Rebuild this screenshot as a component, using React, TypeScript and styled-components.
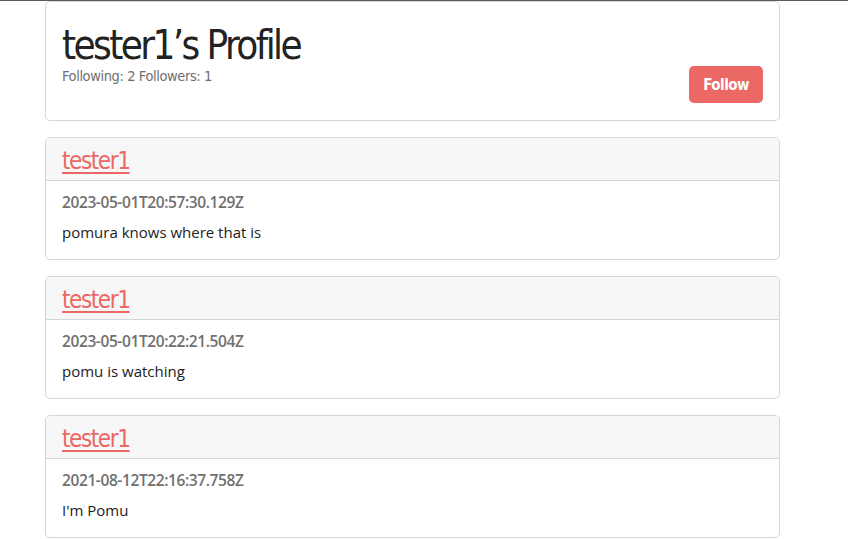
import styled, { createGlobalStyle } from "styled-components";

const Global = createGlobalStyle`
  html, body {
    margin: 0;
    padding: 0;
    background: #fff;
  }
  body {
    font-family: "Open Sans", "DejaVu Sans", sans-serif;
    color: #222;
  }
`;

const TopBar = styled.div`
  height: 1px;
  background: #5b5b5b;
`;

const Container = styled.div`
  width: 735px;
  margin-left: 45px;
  display: flex;
  flex-direction: column;
  gap: 16px;
`;

const Card = styled.div`
  border: 1px solid #d6d6d6;
  border-radius: 5px;
  background: #fff;
  overflow: hidden;
`;

const ProfileBody = styled.div`
  display: flex;
  justify-content: space-between;
  align-items: flex-end;
  padding: 16px;
  height: 86px;
`;

const Heading = styled.div`
  align-self: flex-start;
  padding-top: 3px;
`;

const Title = styled.h1`
  margin: 0;
  font-family: "DejaVu Sans Condensed", "DejaVu Sans", sans-serif;
  font-weight: 400;
  font-size: 40px;
  line-height: 48px;
  letter-spacing: -2.6px;
  color: #222;
`;

const Stats = styled.div`
  font-family: "DejaVu Sans Condensed", "DejaVu Sans", sans-serif;
  font-size: 14.5px;
  letter-spacing: -0.4px;
  line-height: 18px;
  color: #6f6f6f;
  margin-top: -2px;
`;

const FollowButton = styled.button`
  background: #eb6864;
  color: #fff;
  border: none;
  border-radius: 5px;
  font-family: "DejaVu Sans Condensed", "DejaVu Sans", sans-serif;
  font-weight: bold;
  font-size: 15px;
  letter-spacing: -0.5px;
  padding: 0 14px;
  height: 37px;
  margin-bottom: 1px;
`;

const PostHeader = styled.div`
  background: #f7f7f7;
  border-bottom: 1px solid #d6d6d6;
  height: 43px;
  padding: 4px 16px 0;
  box-sizing: border-box;
  display: flex;
  align-items: center;
`;

const Author = styled.a`
  font-family: "DejaVu Sans Condensed", "DejaVu Sans", sans-serif;
  font-size: 24px;
  color: #eb6864;
  text-decoration: underline;
  text-decoration-thickness: 2px;
  text-underline-offset: 3px;
  letter-spacing: -1.4px;
`;

const PostBody = styled.div`
  padding: 11px 16px 16px;
  height: 51px;
`;

const Stamp = styled.div`
  font-size: 15.5px;
  font-weight: 600;
  color: #707070;
  letter-spacing: -0.4px;
  line-height: 20px;
`;

const Text = styled.div`
  font-size: 15px;
  color: #222;
  line-height: 20px;
  margin-top: 10px;
`;

const posts = [
  { date: "2023-05-01T20:57:30.129Z", text: "pomura knows where that is" },
  { date: "2023-05-01T20:22:21.504Z", text: "pomu is watching" },
  { date: "2021-08-12T22:16:37.758Z", text: "I'm Pomu" },
];

export default function App() {
  return (
    <>
      <Global />
      <TopBar />
      <Container>
        <Card>
          <ProfileBody>
            <Heading>
              <Title>tester1’s Profile</Title>
              <Stats>Following: 2 Followers: 1</Stats>
            </Heading>
            <FollowButton>Follow</FollowButton>
          </ProfileBody>
        </Card>
        {posts.map((p) => (
          <Card key={p.date}>
            <PostHeader>
              <Author href="#">tester1</Author>
            </PostHeader>
            <PostBody>
              <Stamp>{p.date}</Stamp>
              <Text>{p.text}</Text>
            </PostBody>
          </Card>
        ))}
      </Container>
    </>
  );
}
